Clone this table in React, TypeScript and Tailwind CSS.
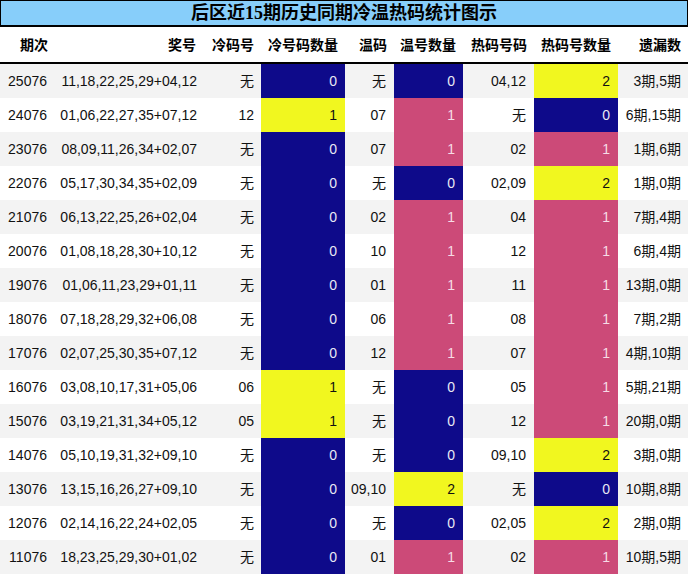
import React from "react";

type Row = [string, string, string, number, string, number, string, number, string];

const rows: Row[] = [
  ["25076", "11,18,22,25,29+04,12", "无", 0, "无", 0, "04,12", 2, "3期,5期"],
  ["24076", "01,06,22,27,35+07,12", "12", 1, "07", 1, "无", 0, "6期,15期"],
  ["23076", "08,09,11,26,34+02,07", "无", 0, "07", 1, "02", 1, "1期,6期"],
  ["22076", "05,17,30,34,35+02,09", "无", 0, "无", 0, "02,09", 2, "1期,0期"],
  ["21076", "06,13,22,25,26+02,04", "无", 0, "02", 1, "04", 1, "7期,4期"],
  ["20076", "01,08,18,28,30+10,12", "无", 0, "10", 1, "12", 1, "6期,4期"],
  ["19076", "01,06,11,23,29+01,11", "无", 0, "01", 1, "11", 1, "13期,0期"],
  ["18076", "07,18,28,29,32+06,08", "无", 0, "06", 1, "08", 1, "7期,2期"],
  ["17076", "02,07,25,30,35+07,12", "无", 0, "12", 1, "07", 1, "4期,10期"],
  ["16076", "03,08,10,17,31+05,06", "06", 1, "无", 0, "05", 1, "5期,21期"],
  ["15076", "03,19,21,31,34+05,12", "05", 1, "无", 0, "12", 1, "20期,0期"],
  ["14076", "05,10,19,31,32+09,10", "无", 0, "无", 0, "09,10", 2, "3期,0期"],
  ["13076", "13,15,16,26,27+09,10", "无", 0, "09,10", 2, "无", 0, "10期,8期"],
  ["12076", "02,14,16,22,24+02,05", "无", 0, "无", 0, "02,05", 2, "2期,0期"],
  ["11076", "18,23,25,29,30+01,02", "无", 0, "01", 1, "02", 1, "10期,5期"],
];

const headers = ["期次", "奖号", "冷码号", "冷号码数量", "温码", "温号数量", "热码号码", "热码号数量", "遗漏数"];

const gridCols = "grid grid-cols-[55px_148px_58px_84px_49px_69px_71px_84px_70px]";

function countCell(n: number, cold: boolean) {
  if (n === 0) return "bg-[#0e0a8a] text-[#e8e8f4]";
  if (n === 2 || (cold && n === 1)) return "bg-[#f1f71f] text-[#111111]";
  return "bg-[#cc4a78] text-[#f6dce6]";
}

export default function App() {
  return (
    <div
      className="w-[688px] h-[575px] bg-white text-[#111111]"
      style={{ fontFamily: '"Liberation Sans", Arial, "Noto Sans CJK SC", sans-serif' }}
    >
      <div className="h-[27px] border-t border-l border-r border-b-2 border-black bg-[#87cefa] flex items-center justify-center">
        <span
          className="text-[18px] font-bold leading-none text-black"
          style={{ fontFamily: '"Liberation Serif", "Noto Sans CJK SC", serif' }}
        >
          后区近15期历史同期冷温热码统计图示
        </span>
      </div>
      <div
        className={`${gridCols} h-[37px] border-b-2 border-black`}
        style={{ fontFamily: '"Noto Sans CJK SC", sans-serif' }}
      >
        {headers.map((h) => (
          <div key={h} className="flex items-center justify-end pr-[7px] text-[14px] font-bold text-black">
            {h}
          </div>
        ))}
      </div>
      {rows.map((r, i) => (
        <div
          key={r[0]}
          className={`${gridCols} h-[34px] text-[14px] ${i % 2 === 0 ? "bg-[#f3f3f3]" : "bg-white"}`}
        >
          <div className="flex items-center justify-end pr-[8px]">{r[0]}</div>
          <div className="flex items-center justify-end pr-[6px]">{r[1]}</div>
          <div className="flex items-center justify-end pr-[7px]">{r[2]}</div>
          <div className={`flex items-center justify-end pr-[8px] ${countCell(r[3], true)}`}>{r[3]}</div>
          <div className="flex items-center justify-end pr-[8px]">{r[4]}</div>
          <div className={`flex items-center justify-end pr-[8px] ${countCell(r[5], false)}`}>{r[5]}</div>
          <div className="flex items-center justify-end pr-[8px]">{r[6]}</div>
          <div className={`flex items-center justify-end pr-[8px] ${countCell(r[7], false)}`}>{r[7]}</div>
          <div className="flex items-center justify-end pr-[7px]">{r[8]}</div>
        </div>
      ))}
    </div>
  );
}
